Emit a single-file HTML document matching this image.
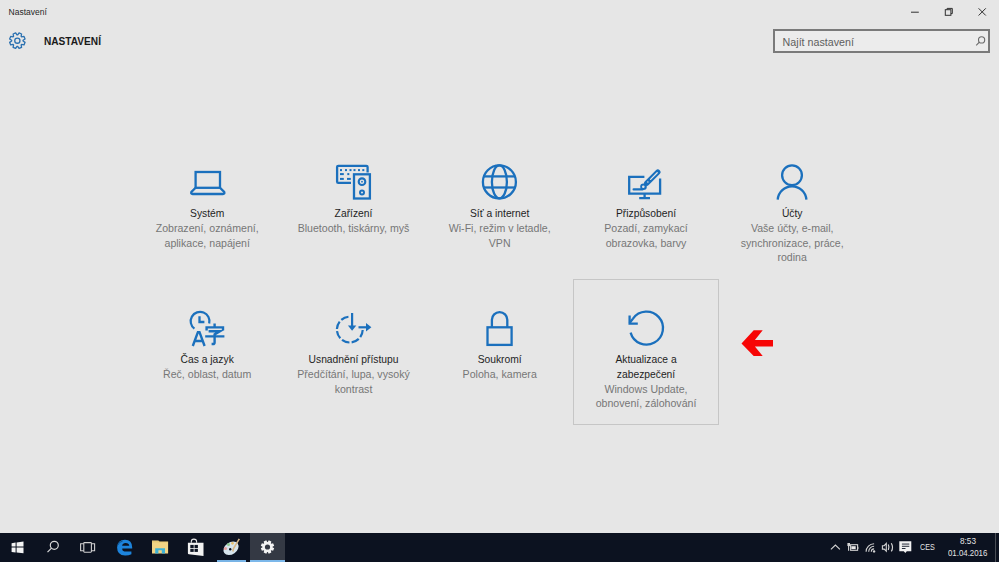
<!DOCTYPE html>
<html><head><meta charset="utf-8">
<style>
*{margin:0;padding:0;box-sizing:border-box}
html,body{width:999px;height:562px;overflow:hidden;background:#e6e6e6;font-family:"Liberation Sans",sans-serif}
.a{position:absolute;white-space:nowrap}
.cell{position:absolute;width:146px;height:146px;text-align:center}
.t{position:absolute;left:0;width:146px;top:72.7px;font-size:10.3px;line-height:14.6px;color:#1e1e1e;white-space:nowrap}
.tt{position:relative;top:0.6px}
.d{display:block;color:#767676;font-size:10.6px;line-height:14.4px}
#tb{position:absolute;left:0;top:533px;width:999px;height:29px;background:#0c1220}
svg{position:absolute;left:0;top:0}
</style></head><body>
<div class="a" style="left:8.6px;top:6px;font-size:8.5px;line-height:12px;color:#262626">Nastavení</div>
<div class="a" style="left:43.5px;top:34.2px;font-size:11px;line-height:14px;color:#1a1a1a;font-weight:bold;transform:scaleX(0.92);transform-origin:0 0">NASTAVENÍ</div>
<div class="a" style="left:773px;top:29px;width:217px;height:24px;border:2px solid #7a7a7a;background:#ececec"></div>
<div class="a" style="left:782.6px;top:34.5px;font-size:10.7px;line-height:14px;color:#5e5e5e">Najít nastavení</div>

<div class="cell" style="left:134.2px;top:134px"><div class="t"><span class="tt">Systém</span><br><span class="d">Zobrazení, oznámení,<br>aplikace, napájení</span></div></div>
<div class="cell" style="left:280.5px;top:134px"><div class="t"><span class="tt">Zařízení</span><br><span class="d">Bluetooth, tiskárny, myš</span></div></div>
<div class="cell" style="left:426.7px;top:134px"><div class="t"><span class="tt">Síť a internet</span><br><span class="d">Wi-Fi, režim v letadle,<br>VPN</span></div></div>
<div class="cell" style="left:573px;top:134px"><div class="t"><span class="tt">Přizpůsobení</span><br><span class="d">Pozadí, zamykací<br>obrazovka, barvy</span></div></div>
<div class="cell" style="left:719.2px;top:134px"><div class="t"><span class="tt">Účty</span><br><span class="d">Vaše účty, e-mail,<br>synchronizace, práce,<br>rodina</span></div></div>
<div class="cell" style="left:134.2px;top:280px"><div class="t"><span class="tt">Čas a jazyk</span><br><span class="d">Řeč, oblast, datum</span></div></div>
<div class="cell" style="left:280.5px;top:280px"><div class="t"><span class="tt">Usnadnění přístupu</span><br><span class="d">Předčítání, lupa, vysoký<br>kontrast</span></div></div>
<div class="cell" style="left:426.7px;top:280px"><div class="t"><span class="tt">Soukromí</span><br><span class="d">Poloha, kamera</span></div></div>
<div class="cell" style="left:573px;top:279px;border:1px solid #c6c6c6"><div class="t" style="left:-1px;top:72.7px"><span class="tt">Aktualizace a<br>zabezpečení</span><br><span class="d">Windows Update,<br>obnovení, zálohování</span></div></div>

<svg width="999" height="562" viewBox="0 0 999 562">
<g fill="none" stroke="#1b70bd" stroke-width="2.3">
 <!-- laptop -->
 <rect x="195.6" y="172" width="24.4" height="15.8"/>
 <path d="M195.6,187.8 L191.4,192 Q190.6,194 192.6,194 L223,194 Q225,194 224.2,192 L220,187.8"/>
 <!-- globe -->
 <circle cx="499.4" cy="181.9" r="16.5"/>
 <ellipse cx="499.4" cy="181.9" rx="7.5" ry="16.5"/>
 <line x1="484" y1="176.4" x2="514.8" y2="176.4"/>
 <line x1="484" y1="187.5" x2="514.8" y2="187.5"/>
 <!-- account -->
 <circle cx="792" cy="175.3" r="9.9"/>
 <path d="M777.7,199.6 A14.4,14.4 0 0 1 806.4,199.6"/>

 <!-- devices keyboard -->
 <path d="M351,182.9 H338.3 Q337.1,182.9 337.1,181.7 V167 Q337.1,165.8 338.3,165.8 H366.4 Q367.6,165.8 367.6,167 V172.5"/>
 <rect x="354" y="174.3" width="15.9" height="24.2"/>
 <circle cx="362" cy="181.7" r="3.3" stroke-width="2.1"/>
 <circle cx="362" cy="192.6" r="2" stroke-width="2"/>
 <!-- personalization monitor -->
 <path d="M644.4,176.9 H629.2 V193.6 H660.1 V178.6"/>
 <path d="M644.6,194 V198.2 M639.2,198.2 H650"/>
 <!-- time language clock -->
 <path d="M194.4,328.7 A9.4,9.4 0 1 1 209.2,323.5" stroke-width="2.2"/>
 <path d="M199.5,316.2 V322 H204.4" stroke-width="2.3"/>
 <path d="M192.8,346 L197.9,332.2 H199.5 L204.6,346 M194.8,341 H202.6" stroke-width="2.4"/>
 <path d="M214.6,323.6 V327 M206.6,330.6 V327.4 H223 V330.6 M208.6,331.2 H220 L214.6,334.4 M205.2,336.4 H224.4 M214.6,333.6 V342.4 Q214.6,344 213,344 H211.6" stroke-width="2.4"/>
 <!-- ease of access -->
  <path d="M348.45,316.77 A12.9,12.9 0 1 0 362.69,330.05" stroke-dasharray="7.91 2.3" stroke-width="2.2"/>
 <path d="M352.1,313 V327" stroke-width="2.2"/>
 <path d="M358.5,327.3 H367" stroke-width="2.2"/>
</g>
<g fill="#1b70bd">
 <polygon points="347.9,325.6 356.3,325.6 352.1,330.8"/>
 <polygon points="366,323 366,331.6 371.4,327.3"/>
</g>
<g fill="none" stroke="#1b70bd" stroke-width="2.3">
 <!-- lock -->
 <rect x="487.5" y="327.3" width="24.1" height="17.6"/>
 <path d="M491.9,327.3 V319.8 A7.7,7.7 0 0 1 507.3,319.8 V327.3"/>
 <!-- update -->
 <path d="M630.6,332.6 A16.5,16.5 0 1 0 633,318.6 L629.6,323"/>
 <path d="M629.6,315.6 V323.6 H637.8"/>
</g>

<g fill="#1b70bd" stroke="none">
 <rect x="340" y="169.1" width="2" height="2"/><rect x="345" y="169.1" width="2" height="2"/><rect x="349.5" y="169.1" width="2" height="2"/>
 <rect x="353.5" y="169.1" width="2" height="2"/><rect x="358" y="169.1" width="2" height="2"/><rect x="362.3" y="169.1" width="2" height="2"/>
 <rect x="340" y="173.1" width="3.8" height="2"/><rect x="347.3" y="173.1" width="2" height="2"/>
 <rect x="340" y="177.9" width="3.8" height="2"/><rect x="347" y="177.9" width="3.8" height="2"/>
 <circle cx="362" cy="181.7" r="0.9"/>
</g>
<!-- brush -->
<g fill="none" stroke-linecap="round">
 <line x1="657.8" y1="172.2" x2="646.8" y2="183.2" stroke="#1b70bd" stroke-width="5.4"/>
 <line x1="657.2" y1="172.8" x2="650.6" y2="179.4" stroke="#e6e6e6" stroke-width="1.3"/>
 <circle cx="647.9" cy="181.9" r="0.75" fill="#e6e6e6" stroke="none"/>
 <path d="M642.5,189.4 H633.6" stroke="#1b70bd" stroke-width="2.2"/>
 <circle cx="643.5" cy="186.8" r="3.3" fill="#1b70bd" stroke="none"/>
 <circle cx="643.3" cy="186.8" r="1.3" fill="#e6e6e6" stroke="none"/>
</g>
<!-- red arrow -->
<polygon points="741.5,343.4 753.7,330.3 762.7,330.3 754.9,339.9 773,339.9 773,346.5 754.9,346.5 762.7,356.1 753.7,356.1" fill="#f70606"/>
<!-- title buttons -->
<g stroke="#303030" stroke-width="1" fill="none">
 <path d="M911,12.2 H918.8"/>
 <rect x="945.3" y="9.7" width="5.6" height="5.6"/>
 <path d="M947.1,9.7 V8.4 H952.3 V13.6 H950.9"/>
 <path d="M978.6,8.3 L985.8,15.5 M985.8,8.3 L978.6,15.5"/>
</g>
<!-- search icon -->
<g stroke="#6a6a6a" stroke-width="1.1" fill="none">
 <circle cx="981.6" cy="39.9" r="3.1"/>
 <path d="M979.4,42.1 L976.2,45.3"/>
</g>
<!-- header gear -->
<path d="M23.04,41.00 L25.06,42.36 L24.01,44.89 L21.62,44.43 L21.13,44.92 L21.59,47.31 L19.06,48.36 L17.70,46.34 L17.00,46.34 L15.64,48.36 L13.11,47.31 L13.57,44.92 L13.08,44.43 L10.69,44.89 L9.64,42.36 L11.66,41.00 L11.66,40.30 L9.64,38.94 L10.69,36.41 L13.08,36.87 L13.57,36.38 L13.11,33.99 L15.64,32.94 L17.00,34.96 L17.70,34.96 L19.06,32.94 L21.59,33.99 L21.13,36.38 L21.62,36.87 L24.01,36.41 L25.06,38.94 L23.04,40.30Z" fill="none" stroke="#2a70b0" stroke-width="1.3" stroke-linejoin="round"/>
<circle cx="17.35" cy="40.65" r="2.6" fill="none" stroke="#2a70b0" stroke-width="1.3"/>
</svg>

<div id="tb"></div>
<div class="a" style="left:250px;top:533px;width:35px;height:29px;background:#343944"></div>
<div class="a" style="left:217px;top:559.7px;width:29.3px;height:2.3px;background:#78b4e6"></div>
<div class="a" style="left:250px;top:559.7px;width:35px;height:2.3px;background:#7cb8ea"></div>
<div class="a" style="left:994.5px;top:533px;width:1px;height:29px;background:#4a4e56"></div>
<div class="a" style="left:919.6px;top:542px;font-size:9px;line-height:10px;color:#e4e4e4;transform:scaleX(0.8);transform-origin:0 0">CES</div>
<div class="a" style="left:960px;top:537.2px;font-size:8.2px;line-height:10px;color:#e4e4e4">8:53</div>
<div class="a" style="left:947.8px;top:549px;font-size:8.2px;line-height:10px;color:#e4e4e4;transform:scaleX(0.96);transform-origin:0 0">01.04.2016</div>
<svg width="999" height="562" viewBox="0 0 999 562">
 <!-- start -->
 <g fill="#f4f4f4">
  <polygon points="11.6,543.2 15.6,542.6 15.6,546.6 11.6,546.6"/>
  <polygon points="16.6,542.45 23.5,541.4 23.5,546.6 16.6,546.6"/>
  <polygon points="11.6,547.4 15.6,547.4 15.6,552.4 11.6,551.9"/>
  <polygon points="16.6,547.4 23.5,547.4 23.5,553.3 16.6,552.5"/>
 </g>
 <!-- search -->
 <g fill="none" stroke="#d8d8d8" stroke-width="1.2">
  <circle cx="54.3" cy="545.3" r="4"/>
  <path d="M51.5,548.1 L47.5,552.2"/>
 </g>
 <!-- task view -->
 <g fill="none" stroke="#cfcfcf" stroke-width="1.1">
  <rect x="83.8" y="542.6" width="7.6" height="9.6" rx="0.6"/>
  <path d="M83.8,543.8 H80.6 V550.8 H83.8 M91.4,543.8 H94.6 V550.8 H91.4"/>
 </g>
 <!-- edge -->
 <path fill-rule="evenodd" fill="#1d84dc" d="M131.4,551.6 V554.2 Q128.6,555.5 125,555.4 Q117.1,555.1 117.1,547.4 Q117.3,539.9 125,539.8 Q132.2,539.9 132.2,547.6 V548.4 H122.3 V549.6 Q122.6,551.6 126,551.6 Z M122.1,545.7 Q122.6,543.1 125.6,543.1 Q128.9,543.1 129.3,545.7 Z"/>
 <path d="M117.8,545 Q119.2,541.6 122.6,541.2" stroke="#0c3a66" stroke-width="0.7" fill="none"/>
 <!-- explorer -->
 <path d="M152,540.6 H158.4 L159.6,541.8 H168.1 V553.6 H152 Z" fill="#f1d485"/>
 <path d="M152,541.8 H168.1" stroke="#d8b860" stroke-width="0.6"/>
 <path d="M155.2,553.6 V548.2 H165 V553.6 H161.8 V550.3 H158.4 V553.6 Z" fill="#3fb2d6"/>
 <!-- store -->
 <path d="M187.9,542.8 H203.5 V556.1 L188.9,554.2 Q187.9,554.1 187.9,553.2 Z" fill="#f2f2f2"/>
 <path d="M191.3,542.8 V541.6 Q191.3,539.1 193.9,539.1 Q196.6,539.1 196.6,541.6 V542.8" fill="none" stroke="#e8e8e8" stroke-width="1.1"/>
 <g fill="#0c1322">
  <rect x="190.3" y="544.9" width="3.4" height="3.1"/><rect x="194.5" y="544.9" width="3.4" height="3.1"/>
  <rect x="190.3" y="548.8" width="3.4" height="3.1"/><rect x="194.5" y="548.8" width="3.4" height="3.1"/>
 </g>
 <!-- paint -->
 <ellipse cx="231" cy="548.3" rx="8.2" ry="6" transform="rotate(-35 231 548.3)" fill="#d6e4ec"/>
 <circle cx="225.5" cy="548.5" r="1.6" fill="#e8a0a0"/>
 <circle cx="228.5" cy="544.5" r="1.5" fill="#8cc88c"/>
 <circle cx="232.5" cy="543.3" r="1.4" fill="#e8c070"/>
 <circle cx="230.2" cy="549.2" r="1.2" fill="#0c1322"/>
 <path d="M239.3,538.8 L237,542.6 L233.5,548.6 L232.8,551.5" stroke="#d8b888" stroke-width="1.6" fill="none"/>
 <!-- settings gear (active) -->
 <path d="M272.49,547.31 L274.19,548.24 L273.10,550.85 L271.24,550.31 L270.81,550.74 L271.35,552.60 L268.74,553.69 L267.81,551.99 L267.19,551.99 L266.26,553.69 L263.65,552.60 L264.19,550.74 L263.76,550.31 L261.90,550.85 L260.81,548.24 L262.51,547.31 L262.51,546.69 L260.81,545.76 L261.90,543.15 L263.76,543.69 L264.19,543.26 L263.65,541.40 L266.26,540.31 L267.19,542.01 L267.81,542.01 L268.74,540.31 L271.35,541.40 L270.81,543.26 L271.24,543.69 L273.10,543.15 L274.19,545.76 L272.49,546.69Z" fill="#f4f4f4"/>
 <circle cx="267.5" cy="547" r="2.6" fill="#343944"/>
 <!-- tray -->
 <g fill="none" stroke="#d4d4d4" stroke-width="1.1">
  <path d="M830.9,549.4 L835.4,545.1 L839.9,549.4"/>
  <rect x="850.6" y="544.7" width="7" height="5.6"/>
  <path d="M848.6,546 V550.8"/>
  <path d="M866.1,551.7 A8,8 0 0 1 874.1,543.7 M868.7,551.7 A5.4,5.4 0 0 1 874.1,546.3 M871.3,551.7 A2.8,2.8 0 0 1 874.1,548.9"/>
  <path d="M888.3,544.6 Q889.6,547.3 888.3,550 M891.3,543.2 Q893.8,547.3 891.3,551.4" stroke-width="1.2"/>
 </g>
 <rect x="851.3" y="546.2" width="4.4" height="2.9" fill="#e8e8e8"/>
 <path d="M847.4,543 H850 V545.6 L849,546.4 H848.2 L847.4,545.6 Z" fill="#d4d4d4"/>
 <rect x="857.5" y="546.8" width="0.9" height="2.2" fill="#d4d4d4"/>
 <circle cx="874.1" cy="551.4" r="1.2" fill="#d4d4d4"/>
 <path d="M882.4,545.7 H884.2 L886.3,543.4 V551.2 L884.2,549.1 H882.4 Z" fill="none" stroke="#d4d4d4" stroke-width="1.1"/>
 <path d="M899.3,541.3 H911.3 V551.2 H906.8 L905.3,552.9 L903.8,551.2 H899.3 Z" fill="#f2f2f2"/>
 <g fill="#0c1322"><rect x="901.9" y="543.6" width="7.4" height="0.9"/><rect x="901.9" y="545.8" width="7.4" height="0.9"/><rect x="901.9" y="548" width="3.6" height="0.9"/></g>
</svg>
</body></html>
